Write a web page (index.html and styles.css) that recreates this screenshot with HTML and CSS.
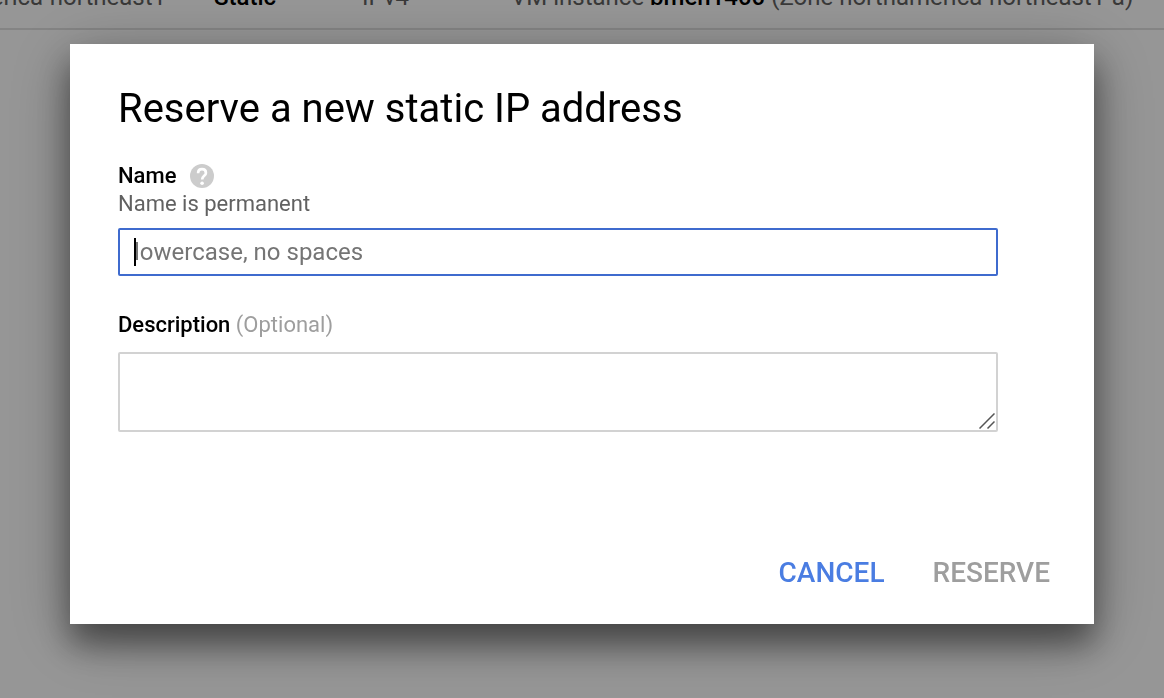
FILE: index.html
```html
<!DOCTYPE html>
<html lang="en">
<head>
<meta charset="utf-8">
<title>Reserve a new static IP address</title>
<link rel="stylesheet" href="styles.css">
</head>
<body>
<main class="page">
  <table class="addresses">
    <tbody>
      <tr>
        <td class="col-region">northamerica-northeast1</td>
        <td class="col-type"><b>Static</b></td>
        <td class="col-version">IPv4</td>
        <td>VM instance <b>bmen1400</b> (Zone northamerica-northeast1-a)</td>
      </tr>
    </tbody>
  </table>
</main>
<div class="overlay">
  <section class="dialog" role="dialog" aria-modal="true" aria-labelledby="dialog-title">
    <h1 class="title" id="dialog-title">Reserve a new static IP address</h1>
    <form class="form">
      <div class="field">
        <div class="label-row">
          <label class="label" for="name">Name</label>
          <svg class="help" viewBox="0 0 24 24" role="img" aria-label="Help">
            <circle cx="12" cy="12" r="12" fill="#ccc"/>
            <path d="M8.100 9.200C8.100 6.800 9.700 5.200 12 5.200s3.900 1.500 3.900 3.700c0 2.900-3.700 3.100-3.700 6.600" fill="none" stroke="#fff" stroke-width="2.700"/>
            <circle cx="12.100" cy="19.200" r="1.800" fill="#fff"/>
          </svg>
        </div>
        <p class="hint" id="name-hint">Name is permanent</p>
        <div class="control">
          <input class="input" id="name" type="text" placeholder="lowercase, no spaces" aria-describedby="name-hint">
          <span class="caret"></span>
        </div>
      </div>
      <div class="field field-description">
        <label class="label" for="description">Description <span class="optional">(Optional)</span></label>
        <div class="control">
          <textarea class="input textarea" id="description"></textarea>
          <svg class="grip" viewBox="0 0 16 16" aria-hidden="true">
            <path d="M.5 15.500l15-15M8.500 15.500l7-7" fill="none" stroke="#555" stroke-width="1.500"/>
          </svg>
        </div>
      </div>
      <div class="actions">
        <button class="button" type="button">CANCEL</button>
        <button class="button" type="submit" disabled>RESERVE</button>
      </div>
    </form>
  </section>
</div>
</body>
</html>
```
FILE: styles.css
```css
* {
  box-sizing: border-box;
}

body {
  margin: 0;
  overflow: hidden;
  background: #fff;
  color: #000;
  font-family: Roboto, "Liberation Sans", sans-serif;
  font-size: 22px;
  line-height: 28px;
}

.page {
  margin: -34px 0 0 -100px;
}

.addresses {
  width: 100%;
  border-collapse: collapse;
  table-layout: fixed;
  border-bottom: 2px solid #e0e0e0;
}

.addresses td {
  padding: 17px 0;
  color: #616161;
  font-size: 24px;
  white-space: nowrap;
}

.addresses b {
  color: #000;
  font-weight: 500;
}

.addresses .col-region {
  width: 314px;
}

.addresses .col-type {
  width: 148px;
}

.addresses .col-version {
  width: 149px;
}

.overlay {
  position: fixed;
  inset: 0;
  padding: 44px 70px;
  background: rgba(0, 0, 0, 0.41);
}

.dialog {
  padding: 40px 48px 32px;
  background: #fff;
  box-shadow: 0 20px 30px rgba(0, 0, 0, 0.42), 0 12px 60px rgba(0, 0, 0, 0.3);
}

.title {
  margin: 0 0 28px;
  font-size: 40px;
  font-weight: 400;
  line-height: 50px;
}

.field {
  margin-right: 48px;
}

.field-description {
  margin-top: 34px;
}

.label-row {
  display: flex;
  align-items: center;
  gap: 14px;
}

.label {
  display: block;
  font-weight: 500;
  line-height: 30px;
}

.label-row .label {
  line-height: 28px;
}

.help {
  width: 24px;
  height: 24px;
}

.hint {
  margin: 0 0 10px;
  color: #616161;
}

.optional {
  color: #9e9e9e;
  font-weight: 400;
}

.control {
  position: relative;
}

.input {
  display: block;
  width: 100%;
  height: 48px;
  padding: 0 14px;
  border: 2px solid #3f6bce;
  border-radius: 2px;
  outline: 0;
  background: #fff;
  font: inherit;
  font-size: 24px;
}

.input::placeholder {
  color: #757575;
  opacity: 1;
}

.caret {
  position: absolute;
  top: 10px;
  left: 16px;
  width: 2px;
  height: 28px;
  background: #000;
}

.textarea {
  height: 80px;
  margin-top: 12px;
  border-color: #d2d2d2;
  resize: none;
}

.grip {
  position: absolute;
  right: 3px;
  bottom: 3px;
  width: 16px;
  height: 16px;
}

.actions {
  display: flex;
  justify-content: flex-end;
  gap: 48px;
  margin-top: 120px;
  margin-right: -4px;
}

.button {
  padding: 1px 0 0;
  border: 0;
  background: none;
  color: #4a7de2;
  font: inherit;
  font-size: 28px;
  font-weight: 500;
  line-height: 39px;
}

.button:disabled {
  color: #9e9e9e;
}
```
